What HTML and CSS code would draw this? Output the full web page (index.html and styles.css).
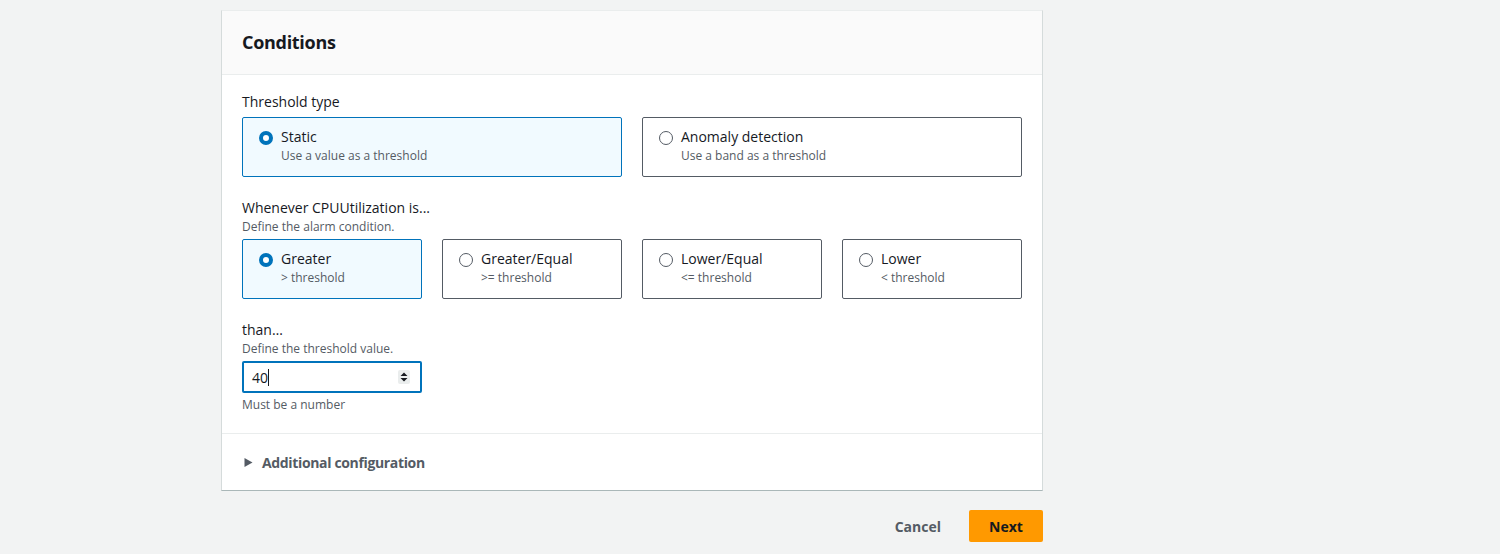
FILE: index.html
```html
<!DOCTYPE html>
<html>
<head>
<meta charset="utf-8">
<link rel="stylesheet" href="styles.css">
</head>
<body>
<div class="page">
  <section class="card">
    <header class="card-header"><h2>Conditions</h2></header>
    <div class="card-body">
      <div class="field">
        <div class="label">Threshold type</div>
        <div class="tiles two">
          <label class="tile selected">
            <span class="radio on"></span>
            <span class="tile-text"><span class="tile-title">Static</span><span class="tile-desc">Use a value as a threshold</span></span>
          </label>
          <label class="tile">
            <span class="radio"></span>
            <span class="tile-text"><span class="tile-title">Anomaly detection</span><span class="tile-desc">Use a band as a threshold</span></span>
          </label>
        </div>
      </div>
      <div class="field">
        <div class="label">Whenever CPUUtilization is...</div>
        <div class="desc">Define the alarm condition.</div>
        <div class="tiles four">
          <label class="tile selected">
            <span class="radio on"></span>
            <span class="tile-text"><span class="tile-title">Greater</span><span class="tile-desc">&gt; threshold</span></span>
          </label>
          <label class="tile">
            <span class="radio"></span>
            <span class="tile-text"><span class="tile-title">Greater/Equal</span><span class="tile-desc">&gt;= threshold</span></span>
          </label>
          <label class="tile">
            <span class="radio"></span>
            <span class="tile-text"><span class="tile-title">Lower/Equal</span><span class="tile-desc">&lt;= threshold</span></span>
          </label>
          <label class="tile">
            <span class="radio"></span>
            <span class="tile-text"><span class="tile-title">Lower</span><span class="tile-desc">&lt; threshold</span></span>
          </label>
        </div>
      </div>
      <div class="field">
        <div class="label">than…</div>
        <div class="desc">Define the threshold value.</div>
        <div class="input">
          <span class="value">40</span><span class="caret"></span>
          <svg class="spin" width="12" height="14" viewBox="0 0 12 14"><path d="M6 2.5 L9.5 6 H2.5 Z M6 11.5 L2.5 8 H9.5 Z" fill="#16191f"/></svg>
        </div>
        <div class="hint">Must be a number</div>
      </div>
    </div>
    <div class="card-footer">
      <svg class="tri" width="9" height="11" viewBox="0 0 9 11"><path d="M0.5 1 L8.5 5.5 L0.5 10 Z" fill="#545b64"/></svg>
      <span>Additional configuration</span>
    </div>
  </section>
  <div class="actions">
    <button class="btn link">Cancel</button>
    <button class="btn primary">Next</button>
  </div>
</div>
</body>
</html>
```
FILE: styles.css
```css
* { box-sizing: border-box; }
html, body { margin: 0; padding: 0; }
body {
  background: #f2f3f3;
  font-family: "Open Sans", "Noto Sans", Arial, sans-serif;
  color: #16191f;
  font-size: 14px;
  width: 1500px;
  height: 554px;
  overflow: hidden;
}
.page {
  width: 822px;
  margin-left: 221px;
  padding-top: 10px;
}
.card {
  background: #fff;
  border-top: 1px solid #eaeded;
  border-left: 1px solid #d5dbdb;
  border-right: 1px solid #d5dbdb;
  border-bottom: 1px solid #aab7b8;
}
.card-header {
  background: #fafafa;
  border-bottom: 1px solid #eaeded;
  height: 64px;
  display: flex;
  align-items: center;
  padding: 0 20px;
}
.card-header h2 {
  margin: 0;
  font-size: 18px;
  font-weight: 700;
  letter-spacing: -0.3px;
  position: relative;
  top: -1px;
}
.card-body {
  padding: 16px 20px 20px;
  border-bottom: 1px solid #eaeded;
}
.field + .field { margin-top: 20px; }
.label { font-size: 14px; line-height: 22px; }
.desc { font-size: 12px; line-height: 16px; color: #545b64; }
.tiles { display: grid; gap: 20px; margin-top: 4px; }
.tiles.two { grid-template-columns: 380px 380px; }
.tiles.four { grid-template-columns: repeat(4, 180px); }
.tile {
  height: 60px;
  border: 1px solid #545b64;
  border-radius: 2px;
  display: flex;
  align-items: flex-start;
  padding: 9px 16px;
  gap: 8px;
}
.tile.selected { background: #f1faff; border-color: #0073bb; }
.radio {
  width: 14px; height: 14px;
  border-radius: 50%;
  border: 1px solid #545b64;
  margin-top: 4px;
  flex: none;
}
.radio.on {
  border: 4px solid #0073bb;
  background: #fff;
}
.tile-text { display: flex; flex-direction: column; }
.tile-title { font-size: 14px; line-height: 20px; }
.tile-desc { font-size: 12px; line-height: 18px; color: #545b64; }
.input {
  margin-top: 4px;
  width: 180px;
  height: 32px;
  border: 2px solid #0073bb;
  border-radius: 2px;
  display: flex;
  align-items: center;
  padding: 0 10px 0 8px;
}
.value { font-size: 14px; }
.caret { width: 1px; height: 17px; background: #16191f; }
.spin { margin-left: auto; background: #eaeded; border-radius: 2px; }
.hint { font-size: 12px; color: #545b64; margin-top: 4px; line-height: 16px; }
.card-footer {
  height: 56px;
  display: flex;
  align-items: center;
  padding: 0 20px 0 22px;
  gap: 9px;
  font-weight: 700;
  color: #545b64;
  font-size: 14px;
  letter-spacing: -0.35px;
}
.actions {
  display: flex;
  justify-content: flex-end;
  align-items: center;
  margin-top: 19px;
  gap: 8px;
}
.btn {
  font-family: inherit;
  font-weight: 700;
  font-size: 14px;
  border: none;
  border-radius: 2px;
  height: 32px;
  padding: 0 20px;
  cursor: pointer;
}
.btn.link { background: transparent; color: #545b64; }
.btn.primary { background: #ff9900; color: #16191f; width: 74px; padding: 0; }
```
